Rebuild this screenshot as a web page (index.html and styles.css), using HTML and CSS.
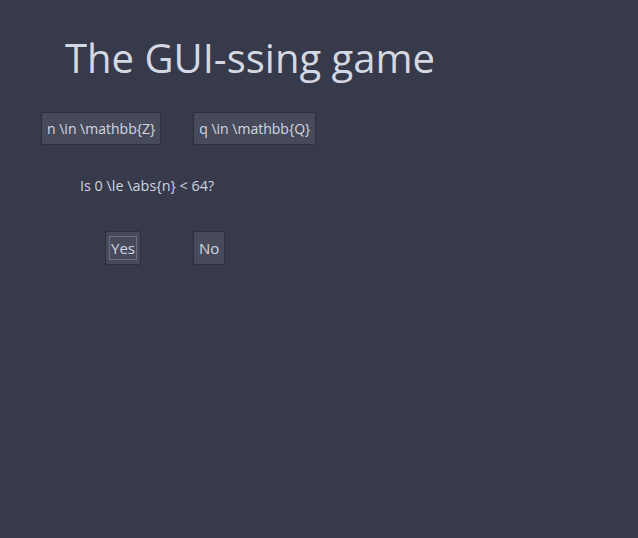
FILE: index.html
```html
<!DOCTYPE html>
<html>
<head>
<meta charset="utf-8">
<link rel="stylesheet" href="styles.css">
</head>
<body>
<div class="app">
  <h1 class="title">The GUI-ssing game</h1>
  <div class="choices">
    <button class="btn wide">n \in \mathbb{Z}</button>
    <button class="btn wide">q \in \mathbb{Q}</button>
  </div>
  <p class="question">Is 0 \le \abs{n} &lt; 64?</p>
  <div class="answers">
    <button class="btn small focus">Yes</button>
    <button class="btn small">No</button>
  </div>
</div>
</body>
</html>
```
FILE: styles.css
```css
html, body {
  margin: 0;
  padding: 0;
  background: #363a4a;
  width: 638px;
  height: 538px;
  overflow: hidden;
}
.app {
  font-family: "Open Sans", "Noto Sans", sans-serif;
  color: #cfd3de;
  padding: 34px 0 0 0;
}
.title {
  margin: 0 0 0 65px;
  font-weight: 400;
  font-size: 40px;
  line-height: 48px;
  color: #d4d8e2;
}
.choices {
  display: flex;
  gap: 32px;
  margin: 30px 0 0 41px;
}
.btn {
  font-family: inherit;
  font-size: 14px;
  color: #d3d7e0;
  background: #464a5b;
  border: 1px solid #2c2f3c;
  border-radius: 2px;
  height: 33px;
  padding: 0 5px;
  position: relative;
}
.question {
  margin: 31px 0 0 80px;
  font-size: 14.4px;
  line-height: 20px;
  color: #d0d4de;
}
.answers {
  display: flex;
  gap: 52px;
  margin: 35px 0 0 105px;
}
.btn.small {
  font-size: 15px;
  height: 34px;
  padding: 0 5px;
}
.btn.focus::after {
  content: "";
  position: absolute;
  inset: 4px 3px;
  border: 1px solid #6a6e7d;
}
```
